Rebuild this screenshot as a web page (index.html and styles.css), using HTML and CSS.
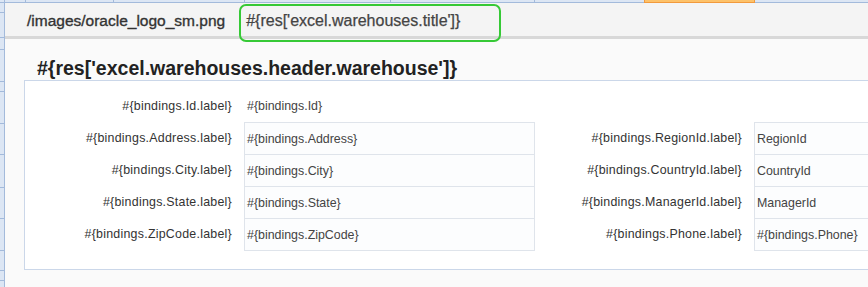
FILE: index.html
```html
<!DOCTYPE html>
<html>
<head>
<meta charset="utf-8">
<link rel="stylesheet" href="styles.css">
</head>
<body>
<div class="sheet">
  <div class="colbar">
    <span class="col c5"></span>
    <span class="col c21"></span>
    <span class="col c88"></span>
    <span class="col c131"></span>
    <span class="col c146"></span>
    <span class="col c144"></span>
    <span class="col c109 nob"></span>
    <span class="col sel"></span>
    <span class="col rest"></span>
  </div>
  <div class="frame">
    <div class="rowbar">
      <span class="row h9"></span>
      <span class="row h24"></span>
      <span class="row h11"></span>
      <span class="row h31"></span>
      <span class="row h9"></span>
      <span class="row h31"></span>
      <span class="row h30"></span>
      <span class="row h32"></span>
      <span class="row h30"></span>
      <span class="row h31"></span>
      <span class="row h19"></span>
      <span class="row h9"></span>
      <span class="row rest"></span>
    </div>
    <main class="page">
      <header class="topbar">
        <span class="logo">/images/oracle_logo_sm.png</span>
        <span class="title">#{res['excel.warehouses.title']}</span>
      </header>
      <h1 class="heading">#{res['excel.warehouses.header.warehouse']}</h1>
      <section class="panel">
        <div class="form">
          <div class="lbl">#{bindings.Id.label}</div>
          <div class="val plain">#{bindings.Id}</div>
          <div class="lbl"></div>
          <div class="val plain"></div>

          <div class="lbl">#{bindings.Address.label}</div>
          <div class="val box">#{bindings.Address}</div>
          <div class="lbl">#{bindings.RegionId.label}</div>
          <div class="val box">RegionId</div>

          <div class="lbl">#{bindings.City.label}</div>
          <div class="val box">#{bindings.City}</div>
          <div class="lbl">#{bindings.CountryId.label}</div>
          <div class="val box">CountryId</div>

          <div class="lbl">#{bindings.State.label}</div>
          <div class="val box">#{bindings.State}</div>
          <div class="lbl">#{bindings.ManagerId.label}</div>
          <div class="val box">ManagerId</div>

          <div class="lbl">#{bindings.ZipCode.label}</div>
          <div class="val box last">#{bindings.ZipCode}</div>
          <div class="lbl">#{bindings.Phone.label}</div>
          <div class="val box last">#{bindings.Phone}</div>
        </div>
      </section>
    </main>
  </div>
</div>
</body>
</html>
```

FILE: styles.css
```css
html, body {
  margin: 0;
  padding: 0;
}
body {
  width: 868px;
  height: 287px;
  overflow: hidden;
  background: #fafafa;
  font-family: "Liberation Sans", Arial, sans-serif;
}
.sheet {
  display: flex;
  flex-direction: column;
  height: 287px;
}
.colbar {
  display: flex;
  height: 3px;
  flex: none;
}
.col {
  box-sizing: border-box;
  height: 3px;
  background: #dce6f4;
  border-right: 1px solid #a3badb;
  border-bottom: 1px solid #a3badb;
  flex: none;
}
.c5 { width: 5px; }
.c21 { width: 21px; }
.c88 { width: 88px; }
.c131 { width: 131px; }
.c146 { width: 146px; }
.c144 { width: 144px; }
.c109 { width: 109px; }
.nob { border-right: none; }
.col.sel {
  width: 111px;
  background: #fdc26a;
  border-left: 1px solid #f29a3c;
  border-right: 1px solid #f29a3c;
  border-bottom: 1px solid #f29a3c;
}
.col.rest { flex: 1; border-right: none; }

.frame {
  display: flex;
  flex: 1;
  min-height: 0;
}
.rowbar {
  display: flex;
  flex-direction: column;
  width: 5px;
  flex: none;
}
.row {
  box-sizing: content-box;
  width: 4px;
  background: #dce6f4;
  border-right: 1px solid #a3badb;
  border-bottom: 1px solid #a3badb;
  flex: none;
}
.h9 { height: 9px; }
.h11 { height: 11px; }
.h19 { height: 19px; }
.h24 { height: 24px; }
.h30 { height: 30px; }
.h31 { height: 31px; }
.h32 { height: 32px; }
.row.rest { flex: 1; border-bottom: none; }

.page {
  flex: 1;
  min-width: 0;
  display: flex;
  flex-direction: column;
  overflow: hidden;
}
.topbar {
  box-sizing: content-box;
  height: 32px;
  padding: 1px 0 0 22px;
  background: #f4f4f4;
  border-bottom: 3px solid #d8d8d8;
  display: flex;
  align-items: flex-start;
  gap: 14px;
  flex: none;
}
.logo {
  font-size: 15.5px;
  line-height: 18px;
  padding-top: 8px;
  color: #333;
  -webkit-text-stroke: 0.35px #333;
}
.title {
  box-sizing: border-box;
  width: 262px;
  height: 38px;
  padding: 6px 0 0 5px;
  border: 2px solid #36c936;
  border-radius: 7px;
  font-size: 16px;
  line-height: 18px;
  color: #444;
  -webkit-text-stroke: 0.25px #444;
  flex: none;
}
.heading {
  margin: 18px 0 0 32px;
  font-size: 19.5px;
  line-height: 23px;
  font-weight: bold;
  color: #222;
}
.panel {
  margin-left: 19px;
  width: 1100px;
  background: #fff;
  border: 1px solid #cbd7e9;
  padding: 9px 0 19px 0;
  flex: none;
}
.form {
  display: grid;
  grid-template-columns: 219px 291px 219px 291px;
  grid-auto-rows: 32px;
}
.lbl {
  padding-right: 12px;
  text-align: right;
  font-size: 12.4px;
  letter-spacing: 0.25px;
  color: #333;
  display: flex;
  align-items: center;
  justify-content: flex-end;
}
.val {
  box-sizing: border-box;
  font-size: 12.4px;
  color: #444;
  display: flex;
  align-items: center;
  white-space: nowrap;
}
.val.plain {
  padding-left: 3px;
}
.val.box {
  padding-left: 2px;
  background: #fcfdfe;
  border: 1px solid #dfe4eb;
  border-bottom: none;
}
.val.box.last {
  box-shadow: 0 1px 0 #dfe4eb;
}
```
